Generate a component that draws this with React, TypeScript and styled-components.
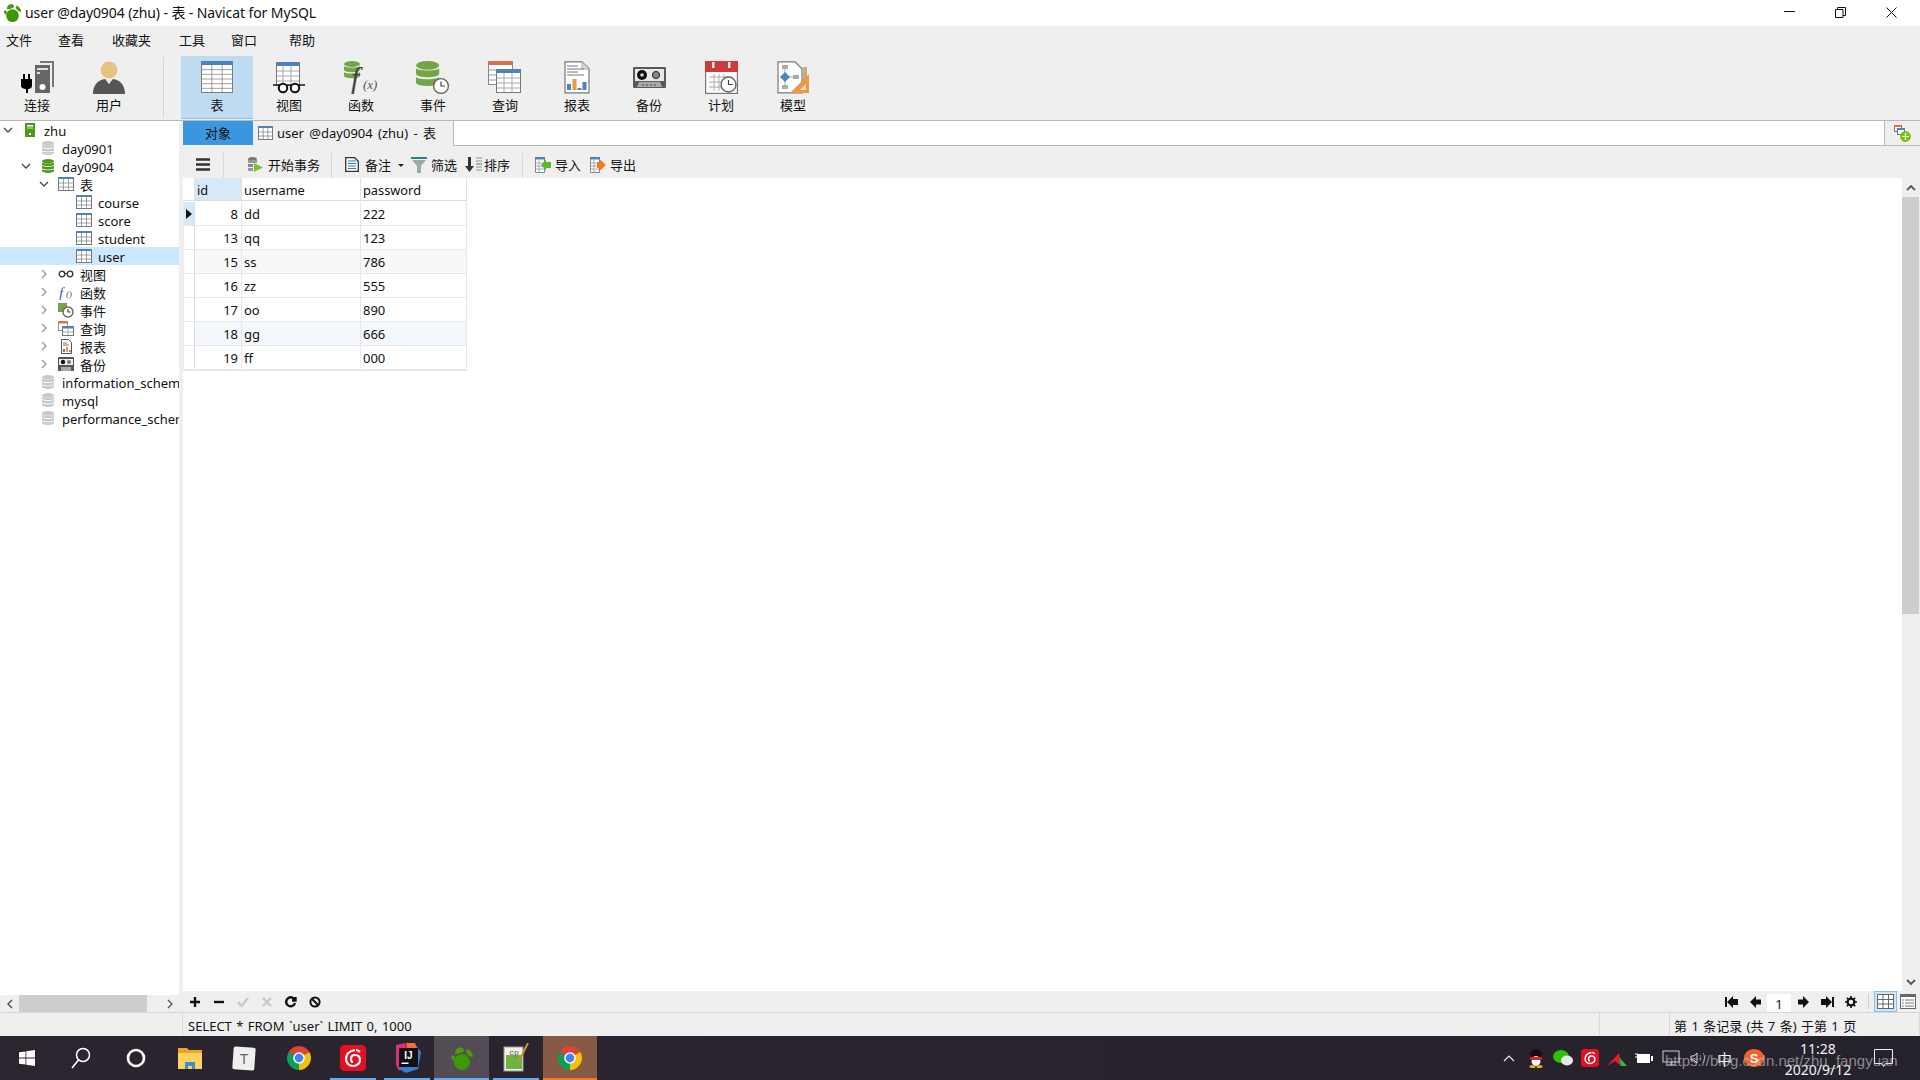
import React from "react";
import styled, { createGlobalStyle } from "styled-components";

const Global = createGlobalStyle`
  html, body { margin: 0; padding: 0; background: #efefef; overflow: hidden; }
  * { box-sizing: border-box; }
  #root { width: 1920px; height: 1080px; }
`;

const FONT = `"Noto Sans", "Noto Sans CJK SC", sans-serif`;

const Page = styled.div`
  position: relative;
  width: 1920px;
  height: 1080px;
  display: flex;
  flex-direction: column;
  overflow: hidden;
  font-family: ${FONT};
  font-size: 13px;
  color: #111;
  background: #efefef;
`;

const TitleBar = styled.div`
  height: 26px;
  flex: none;
  display: flex;
  align-items: center;
  background: #fff;
  padding: 0 3px 2px 3px;
`;
const TitleText = styled.span`
  margin-left: 3px;
  font-size: 14px;
  letter-spacing: -0.1px;
  white-space: nowrap;
`;
const WinButtons = styled.div`
  margin-left: auto;
  display: flex;
`;
const WinButton = styled.div`
  width: 51px;
  height: 24px;
  display: flex;
  align-items: center;
  justify-content: center;
`;

const MenuBar = styled.div`
  height: 29px;
  flex: none;
  display: flex;
  align-items: center;
  padding: 0 0 2px 6px;
`;
const MenuItem = styled.span<{ $w: number }>`
  width: ${(p) => p.$w}px;
  flex: none;
  font-size: 13px;
`;

const Toolbar = styled.div`
  height: 65px;
  flex: none;
  display: flex;
  padding-left: 1px;
`;
const ToolItem = styled.div<{ $active?: boolean }>`
  width: 72px;
  height: 63px;
  margin-top: 1px;
  padding-top: 3px;
  display: flex;
  flex-direction: column;
  align-items: center;
  background: ${(p) => (p.$active ? "#bedbf2" : "transparent")};
  border-bottom: ${(p) => (p.$active ? "1px solid #8fc3ee" : "none")};
`;
const ToolIcon = styled.div`
  height: 36px;
  display: flex;
  align-items: center;
  justify-content: center;
`;
const ToolLabel = styled.span`
  margin-top: 1px;
  line-height: 18px;
  font-size: 13px;
`;
const ToolSep = styled.div`
  width: 36px;
  display: flex;
  justify-content: center;
  &::before {
    content: "";
    width: 1px;
    height: 61px;
    margin-top: 2px;
    background: #d6d6d6;
  }
`;

const Workspace = styled.div`
  height: 893px;
  flex: none;
  display: flex;
  border-top: 1px solid #b8b8b8;
  border-bottom: 1px solid #d6d6d6;
`;
const Sidebar = styled.div`
  width: 183px;
  flex: none;
  display: flex;
  flex-direction: column;
`;
const Tree = styled.div`
  width: 179px;
  flex: 1;
  background: #fff;
  overflow: hidden;
`;
const TreeRow = styled.div<{ $level: number; $selected?: boolean }>`
  height: 18px;
  display: flex;
  align-items: center;
  padding-left: ${(p) => p.$level * 18}px;
  background: ${(p) => (p.$selected ? "#cce8ff" : "transparent")};
  white-space: nowrap;
  overflow: hidden;
`;
const Chevron = styled.div`
  width: 16px;
  flex: none;
  display: flex;
  justify-content: center;
`;
const TreeIcon = styled.div`
  width: 28px;
  flex: none;
  display: flex;
  justify-content: center;
`;
const TreeText = styled.span`
  font-size: 13px;
  line-height: 18px;
  padding-top: 2px;
`;
const HScroll = styled.div`
  width: 183px;
  height: 17px;
  flex: none;
  display: flex;
  align-items: center;
`;
const HArrow = styled.div<{ $w: number; $end?: boolean }>`
  width: ${(p) => p.$w}px;
  flex: none;
  display: flex;
  justify-content: ${(p) => (p.$end ? "flex-end" : "center")};
  padding-right: ${(p) => (p.$end ? 10 : 0)}px;
`;
const HThumb = styled.div`
  width: 128px;
  height: 17px;
  flex: none;
  background: #cdcdcd;
`;

const Main = styled.div`
  flex: 1;
  min-width: 0;
  display: flex;
  flex-direction: column;
`;
const Tabs = styled.div`
  height: 25px;
  flex: none;
  display: flex;
`;
const ObjectTab = styled.div`
  width: 70px;
  height: 24px;
  flex: none;
  display: flex;
  align-items: center;
  justify-content: center;
  padding-bottom: 2px;
  background: #3b96e0;
`;
const DocTab = styled.div`
  width: 200px;
  height: 24px;
  flex: none;
  display: flex;
  align-items: center;
  gap: 4px;
  padding: 0 0 1px 5px;
  font-size: 13px;
  word-spacing: 2px;
  white-space: nowrap;
`;
const TabFill = styled.div`
  flex: 1;
  background: #fff;
  border-left: 1px solid #b8b8b8;
  border-right: 1px solid #b8b8b8;
  border-bottom: 1px solid #b8b8b8;
`;
const TabAdd = styled.div`
  width: 35px;
  flex: none;
  display: flex;
  align-items: center;
  justify-content: flex-start;
  padding-left: 9px;
  border-bottom: 1px solid #b8b8b8;
`;

const SubBar = styled.div`
  height: 32px;
  flex: none;
  display: flex;
  align-items: flex-end;
`;
const SubGroup = styled.div<{ $w?: number; $pad: number }>`
  ${(p) => (p.$w ? `width: ${p.$w}px; flex: none;` : "")}
  height: 25px;
  padding: 0 0 2px ${(p) => p.$pad}px;
  display: flex;
  align-items: center;
  border-right: ${(p) => (p.$w ? "1px solid #d8d8d8" : "none")};
`;
const SubBtn = styled.div<{ $gap: number; $left?: number }>`
  display: flex;
  align-items: center;
  gap: ${(p) => p.$gap}px;
  margin-left: ${(p) => p.$left ?? 0}px;
  font-size: 13px;
  white-space: nowrap;
`;
const Caret = styled.div`
  width: 20px;
  display: flex;
  justify-content: center;
  &::before {
    content: "";
    margin-top: 1px;
    border-left: 3px solid transparent;
    border-right: 3px solid transparent;
    border-top: 3px solid #222;
  }
`;

const Content = styled.div`
  flex: 1;
  min-height: 0;
  display: flex;
`;
const GridArea = styled.div`
  flex: 1;
  background: #fff;
`;
const Grid = styled.div`
  width: 284px;
  display: grid;
  grid-template-columns: 12px 47px 119px 106px;
  grid-auto-rows: 24px;
  border-bottom: 1px solid #e6e6e6;
`;
const HeadCell = styled.div<{ $active?: boolean }>`
  height: 23px;
  padding: 1px 0 0 2px;
  display: flex;
  align-items: center;
  font-size: 12.8px;
  background: ${(p) => (p.$active ? "#d7e8f7" : "#fff")};
  border-right: 1px solid #e2e2e2;
  border-bottom: 1px solid #dcdcdc;
`;
const Cell = styled.div<{ $right?: boolean; $bg?: string }>`
  display: flex;
  align-items: center;
  justify-content: ${(p) => (p.$right ? "flex-end" : "flex-start")};
  padding: 0 3px 0 2px;
  font-size: 13px;
  background: ${(p) => p.$bg ?? "#fff"};
  border-right: 1px solid #e8e8e8;
  border-bottom: 1px solid #e8e8e8;
`;
const RowHead = styled.div<{ $active?: boolean }>`
  display: flex;
  align-items: center;
  justify-content: center;
  background: ${(p) => (p.$active ? "#d7e8f7" : "#fff")};
  border-right: 1px solid #dcdcdc;
  border-bottom: 1px solid #e8e8e8;
  border-left: 1px solid #efefef;
`;
const VScroll = styled.div`
  width: 18px;
  flex: none;
  display: flex;
  flex-direction: column;
  align-items: center;
  padding-right: 1px;
  background: #efefef;
`;
const VArrow = styled.div`
  height: 19px;
  flex: none;
  display: flex;
  align-items: center;
  justify-content: center;
`;
const VThumb = styled.div`
  width: 17px;
  height: 417px;
  flex: none;
  background: #cdcdcd;
`;
const VRest = styled.div`
  flex: 1;
`;

const NavBar = styled.div`
  height: 21px;
  flex: none;
  display: flex;
  align-items: center;
  padding-right: 4px;
`;
const NavCell = styled.div`
  width: 24px;
  flex: none;
  display: flex;
  align-items: center;
  justify-content: center;
`;
const NavSpacer = styled.div`
  flex: 1;
`;
const PageBox = styled.div`
  width: 24px;
  height: 18px;
  margin-top: 3px;
  flex: none;
  background: #fff;
  text-align: center;
  line-height: 20px;
  font-size: 13px;
`;
const NavSep = styled.div`
  width: 1px;
  height: 15px;
  margin: 0 5px;
  background: #d0d0d0;
`;
const ViewBtn = styled.div<{ $on?: boolean; $w: number }>`
  width: ${(p) => p.$w}px;
  height: 21px;
  flex: none;
  margin-left: ${(p) => (p.$on ? 0 : 3)}px;
  display: flex;
  align-items: center;
  justify-content: center;
  background: ${(p) => (p.$on ? "#cfe6f8" : "transparent")};
  border: ${(p) => (p.$on ? "1px solid #8cc0ec" : "none")};
`;

const StatusBar = styled.div`
  height: 23px;
  flex: none;
  display: flex;
  font-size: 13px;
  word-spacing: 1px;
`;
const StatusCell = styled.div<{ $w?: number; $pad?: number }>`
  ${(p) => (p.$w ? `width: ${p.$w}px; flex: none;` : "flex: 1;")}
  padding: 2px 0 0 ${(p) => p.$pad ?? 0}px;
  display: flex;
  align-items: center;
  white-space: nowrap;
  border-right: 1px solid #dadada;
`;

const Taskbar = styled.div`
  height: 44px;
  flex: none;
  display: flex;
  background: linear-gradient(90deg, #2b2530, #28232e 50%, #26222c);
  color: #f2f2f2;
`;
const TaskCell = styled.div<{ $state?: "open" | "active" | "focus" }>`
  position: relative;
  width: 54.3px;
  flex: none;
  display: flex;
  align-items: center;
  justify-content: center;
  background: ${(p) =>
    p.$state === "active" ? "#534c54" : p.$state === "focus" ? "#875a43" : "transparent"};
  &::after {
    content: "";
    display: ${(p) => (p.$state ? "block" : "none")};
    position: absolute;
    left: ${(p) => (p.$state === "open" ? 4 : 0)}px;
    right: ${(p) => (p.$state === "open" ? 4 : 0)}px;
    bottom: 0;
    height: 2px;
    background: ${(p) => (p.$state === "focus" ? "#f57c13" : "#63ace6")};
  }
`;
const Tray = styled.div`
  margin-left: auto;
  display: flex;
  padding-right: 20px;
`;
const TrayCell = styled.div<{ $w?: number }>`
  width: ${(p) => p.$w ?? 27}px;
  flex: none;
  display: flex;
  align-items: center;
  justify-content: center;
  font-size: 15px;
`;
const Clock = styled.div`
  width: 96px;
  flex: none;
  display: flex;
  flex-direction: column;
  align-items: center;
  justify-content: center;
  font-size: 14px;
  line-height: 21px;
  padding-top: 1px;
`;
const NotifyCell = styled.div`
  width: 34px;
  flex: none;
  display: flex;
  align-items: center;
  justify-content: center;
`;
const Watermark = styled.span`
  position: absolute;
  left: 1665px;
  top: 1050px;
  font-family: "Liberation Sans", sans-serif;
  font-size: 15px;
  line-height: 22px;
  color: rgba(205, 205, 205, 0.62);
  white-space: nowrap;
`;

/* ---------- icons ---------- */

const TableIcon = ({ w = 16, h = 14, head = "#4f81bd", cols = 3, rows = 3, line = "#7a7a7a" }: {
  w?: number; h?: number; head?: string; cols?: number; rows?: number; line?: string;
}) => {
  const hh = Math.max(2, Math.round(h * 0.14));
  const v = Array.from({ length: cols - 1 }, (_, i) => 0.5 + ((i + 1) * (w - 1)) / cols);
  const r = Array.from({ length: rows - 1 }, (_, i) => hh + ((i + 1) * (h - hh)) / rows);
  return (
    <svg width={w} height={h} viewBox={`0 0 ${w} ${h}`}>
      <rect x="0.5" y="0.5" width={w - 1} height={h - 1} fill="#fff" stroke={line} />
      <rect x="0" y="0" width={w} height={hh} fill={head} />
      {v.map((x) => <line key={x} x1={x} x2={x} y1={hh} y2={h} stroke={line} strokeOpacity="0.7" />)}
      {r.map((y) => <line key={y} x1="0" x2={w} y1={y} y2={y} stroke={line} strokeOpacity="0.7" />)}
    </svg>
  );
};

const DbIcon = ({ color = "#c9c9c9", w = 12, h = 14 }: { color?: string; w?: number; h?: number }) => (
  <svg width={w} height={h} viewBox="0 0 12 14">
    <ellipse cx="6" cy="2.2" rx="6" ry="2.2" fill={color} />
    <path d="M0 3.4c1 1.5 11 1.5 12 0v2.2c0 2-12 2-12 0z" fill={color} />
    <path d="M0 6.8c1 1.5 11 1.5 12 0V9c0 2-12 2-12 0z" fill={color} />
    <path d="M0 10.2c1 1.5 11 1.5 12 0v1.6c0 2.9-12 2.9-12 0z" fill={color} />
  </svg>
);

const ServerIcon = () => (
  <svg width="11" height="14" viewBox="0 0 11 14">
    <rect width="10" height="14" fill="#4b9a1d" />
    <rect x="2" y="2" width="6" height="1.5" fill="#fff" />
    <rect x="2" y="4.5" width="6" height="1" fill="#cfe8bf" />
    <rect x="4" y="10" width="2" height="2" fill="#fff" />
  </svg>
);

const ClockBadge = ({ cx, cy, r }: { cx: number; cy: number; r: number }) => (
  <g>
    <circle cx={cx} cy={cy} r={r} fill="#fff" stroke="#666" strokeWidth="1.4" />
    <path d={`M${cx} ${cy - r * 0.6}V${cy}H${cx + r * 0.55}`} fill="none" stroke="#444" strokeWidth="1.2" />
  </g>
);

const ConnectIcon = () => (
  <svg width="34" height="33" viewBox="0 0 34 33">
    <path d="M20 1h13v25" fill="none" stroke="#777" strokeWidth="2" />
    <rect x="15" y="4" width="15" height="28" fill="#666" />
    <rect x="17" y="7" width="11" height="2" fill="#ddd" />
    <rect x="17" y="11" width="3" height="2" fill="#ddd" />
    <circle cx="22.5" cy="26" r="3" fill="#fff" />
    <path d="M3 13h2v5h3v-5h2v5h2v7c0 2-2 3-4 3v4H6v-4c-2 0-5-1-5-3v-7h2z" fill="#000" />
  </svg>
);
const UserIcon = () => (
  <svg width="34" height="33" viewBox="0 0 34 33">
    <circle cx="17" cy="9" r="8.4" fill="#e6c381" />
    <path d="M1 33c0-9 5-14 12-15l4 3 4-3c7 1 12 6 12 15z" fill="#555" />
    <path d="M13 18l4 3 4-3-4 5z" fill="#fff" />
  </svg>
);
const ViewIcon = () => (
  <svg width="34" height="33" viewBox="0 0 34 33">
    <rect x="4.5" y="1.5" width="23" height="23" fill="#fff" stroke="#777" />
    <rect x="4" y="1" width="24" height="4" fill="#4f81bd" />
    {[10, 15, 20].map((y) => <line key={y} x1="5" x2="27" y1={y} y2={y} stroke="#aaa" />)}
    {[11, 19].map((x) => <line key={x} x1={x} x2={x} y1="5" y2="24" stroke="#aaa" />)}
    <path d="M1 24h32" stroke="#222" strokeWidth="1.6" />
    <circle cx="11" cy="27" r="4.2" fill="#fff" stroke="#111" strokeWidth="2" />
    <circle cx="23" cy="27" r="4.2" fill="#fff" stroke="#111" strokeWidth="2" />
  </svg>
);
const GreenStack = ({ s = 1 }: { s?: number }) => (
  <g transform={`scale(${s})`}>
    <ellipse cx="8" cy="3" rx="8" ry="3" fill="#73a648" />
    <path d="M0 5c1 2 15 2 16 0v4c-1 3-15 3-16 0z" fill="#73a648" />
    <path d="M0 11c1 2 15 2 16 0v4c-1 3-15 3-16 0z" fill="#73a648" />
  </g>
);
const FuncIcon = () => (
  <svg width="34" height="33" viewBox="0 0 34 33">
    <GreenStack />
    <text x="7" y="27" fontFamily="'Liberation Serif', serif" fontStyle="italic" fontSize="30" fill="#444">f</text>
    <text x="19" y="28" fontFamily="'Liberation Serif', serif" fontStyle="italic" fontSize="13" fill="#555">(x)</text>
  </svg>
);
const EventIcon = () => (
  <svg width="34" height="33" viewBox="0 0 34 33">
    <GreenStack s={1.45} />
    <ClockBadge cx={25} cy={25} r={7.4} />
  </svg>
);
const QueryIcon = () => (
  <svg width="34" height="33" viewBox="0 0 34 33">
    <rect x="0.5" y="0.5" width="24" height="23" fill="#fff" stroke="#888" />
    <rect width="25" height="4" fill="#d9704e" />
    {[9, 14, 19].map((y) => <line key={y} x1="1" x2="8" y1={y} y2={y} stroke="#999" />)}
    <rect x="8.5" y="9.5" width="24" height="22" fill="#fff" stroke="#777" />
    <rect x="8" y="8" width="25" height="4" fill="#4f81bd" />
    {[17, 22, 27].map((y) => <line key={y} x1="9" x2="32" y1={y} y2={y} stroke="#aaa" />)}
    {[16, 24].map((x) => <line key={x} x1={x} x2={x} y1="12" y2="31" stroke="#aaa" />)}
  </svg>
);
const ReportIcon = () => (
  <svg width="26" height="33" viewBox="0 0 26 33">
    <path d="M1 .8h17l7 7v24H1z" fill="#fff" stroke="#777" strokeWidth="1.2" />
    <path d="M18 1v7h7" fill="#ddd" stroke="#aaa" />
    {[5, 8, 11, 14].map((y, i) => <line key={y} x1="3" x2={i % 2 ? 20 : 14} y1={y} y2={y} stroke="#777" />)}
    <rect x="3" y="23" width="4" height="6" fill="#4f81bd" />
    <rect x="8.5" y="18" width="4" height="11" fill="#f09a37" />
    <rect x="13.5" y="27" width="4" height="2" fill="#4f81bd" />
    <rect x="18.5" y="21" width="4" height="8" fill="#4f81bd" />
  </svg>
);
const BackupIcon = () => (
  <svg width="33" height="21" viewBox="0 0 33 21">
    <path d="M1 0h31a1 1 0 011 1v19a1 1 0 01-1 1H1a1 1 0 01-1-1V1a1 1 0 011-1z" fill="#5a5a5a" />
    <rect x="2" y="2" width="29" height="12" fill="#e9e9e9" />
    <circle cx="9" cy="8" r="5" fill="#111" />
    <circle cx="9" cy="8" r="1.8" fill="#ddd" />
    <circle cx="23" cy="8" r="3.6" fill="#888" stroke="#222" />
    <path d="M6 15h21l2 5H4z" fill="#aaa" />
    <path d="M9 18h15" stroke="#444" strokeDasharray="2 2" />
  </svg>
);
const PlanIcon = () => (
  <svg width="33" height="33" viewBox="0 0 33 33">
    <rect x="0.6" y="2" width="31.8" height="30.4" fill="#fff" stroke="#777" strokeWidth="1.2" />
    <rect width="33" height="11" fill="#d0393c" />
    <rect x="7" y="1" width="2.4" height="6" fill="#fff" />
    <rect x="23" y="1" width="2.4" height="6" fill="#fff" />
    {[16, 21, 26].map((y) => <line key={y} x1="4" x2="24" y1={y} y2={y} stroke="#aaa" />)}
    {[9, 14, 19].map((x) => <line key={x} x1={x} x2={x} y1="13" y2="30" stroke="#aaa" />)}
    <ClockBadge cx={23.5} cy={23.5} r={7.5} />
  </svg>
);
const ModelIcon = () => (
  <svg width="33" height="33" viewBox="0 0 33 33">
    <path d="M1 .8h17l7 7v24H1z" fill="#fff" stroke="#777" strokeWidth="1.2" />
    <rect x="5" y="4" width="6" height="4" fill="#aaa" />
    <rect x="5" y="24" width="6" height="4" fill="#aaa" />
    <rect x="16" y="14" width="6" height="4" fill="#aaa" />
    <path d="M8 8v16M8 16h9" stroke="#aaa" />
    <path d="M8 11l5 5-5 5-5-5z" fill="#4f81bd" />
    <rect x="26" y="6" width="4" height="14" fill="#c9ad7f" />
    <path d="M32 13v19H13z" fill="#f1983f" />
    <path d="M29 23v6h-6z" fill="#fff" fillOpacity="0.75" />
  </svg>
);

const ChevronDown = () => (
  <svg width="10" height="6" viewBox="0 0 10 6"><path d="M1 1l4 4 4-4" fill="none" stroke="#444" strokeWidth="1.3" /></svg>
);
const ChevronRight = ({ color = "#9a9a9a" }: { color?: string }) => (
  <svg width="6" height="10" viewBox="0 0 6 10"><path d="M1 1l4 4-4 4" fill="none" stroke={color} strokeWidth="1.3" /></svg>
);
const Glasses = () => (
  <svg width="16" height="8" viewBox="0 0 16 8">
    <circle cx="4" cy="4" r="2.8" fill="none" stroke="#333" strokeWidth="1.3" />
    <circle cx="12" cy="4" r="2.8" fill="none" stroke="#333" strokeWidth="1.3" />
    <path d="M6.5 3.5h3" stroke="#333" />
  </svg>
);
const SmallFunc = () => (
  <svg width="15" height="15" viewBox="0 0 15 15">
    <text x="0" y="13" fontFamily="'Liberation Serif', serif" fontStyle="italic" fontSize="15" fill="#2f6ea8">f</text>
    <text x="7" y="12" fontFamily="'Liberation Serif', serif" fontStyle="italic" fontSize="9" fill="#555">()</text>
  </svg>
);
const SmallEvent = () => (
  <svg width="16" height="15" viewBox="0 0 16 15">
    <rect width="9" height="9" fill="#73a648" />
    <ClockBadge cx={10} cy={9} r={5} />
  </svg>
);
const SmallQuery = () => (
  <svg width="16" height="15" viewBox="0 0 16 15">
    <rect x="0.5" y="0.5" width="9" height="9" fill="#fff" stroke="#999" />
    <rect width="10" height="2.5" fill="#d9704e" />
    <rect x="4.5" y="5.5" width="11" height="9" fill="#fff" stroke="#777" />
    <rect x="4" y="5" width="12" height="2.5" fill="#4f81bd" />
    <path d="M10 7v7M5 11h10" stroke="#aaa" />
  </svg>
);
const SmallReport = () => (
  <svg width="11" height="15" viewBox="0 0 11 15">
    <path d="M.5.5h7l3 3v11H.5z" fill="#fff" stroke="#555" />
    <path d="M2 4h4M2 6h6" stroke="#777" />
    <rect x="2" y="10" width="2" height="3" fill="#4f81bd" />
    <rect x="5" y="8" width="2" height="5" fill="#f09a37" />
    <rect x="8" y="11" width="1.6" height="2" fill="#4f81bd" />
  </svg>
);
const SmallBackup = () => (
  <svg width="16" height="14" viewBox="0 0 16 14">
    <rect width="16" height="14" rx="1" fill="#555" />
    <rect x="1" y="2" width="14" height="6" fill="#eee" />
    <circle cx="5" cy="5" r="2.2" fill="#111" />
    <circle cx="11" cy="5" r="2" fill="#777" />
    <rect x="3" y="10" width="10" height="4" fill="#aaa" />
  </svg>
);
const GreenTop = () => (
  <g>
    <ellipse cx="4.5" cy="2" rx="4.5" ry="2" fill="#777" />
    <rect y="3" width="9" height="3" fill="#999" />
    <rect y="7" width="5" height="3" fill="#888" />
    <rect y="11" width="5" height="3" fill="#999" />
  </g>
);
const BeginIcon = () => (
  <svg width="16" height="15" viewBox="0 0 16 15">
    <GreenTop />
    <path d="M6 6l9 4.5-9 4.5z" fill="#7cc02c" />
  </svg>
);
const NoteIcon = () => (
  <svg width="14" height="15" viewBox="0 0 14 15">
    <path d="M.7.7h9l3.6 3.6v10H.7z" fill="#fff" stroke="#333" strokeWidth="1.3" />
    {[4, 6.5, 9, 11.5].map((y) => <line key={y} x1="3" x2="11" y1={y} y2={y} stroke="#2a78b5" />)}
  </svg>
);
const FilterIcon = () => (
  <svg width="16" height="16" viewBox="0 0 16 16">
    <rect width="16" height="2" fill="#267f8c" />
    <path d="M1 3h14l-5 6v7H6V9z" fill="#9ea7a8" />
  </svg>
);
const SortIcon = () => (
  <svg width="17" height="15" viewBox="0 0 17 15">
    <path d="M3 0h3v9h3l-4.5 6L0 9h3z" fill="#333" />
    <path d="M11 1h6M11 4h6M11 10h6M11 13h6" stroke="#6aa98c" />
    <path d="M11 7h6" stroke="#d83b3b" />
  </svg>
);
const ImportIcon = ({ out }: { out?: boolean }) => (
  <svg width="16" height="16" viewBox="0 0 16 16">
    <path d="M.5 .5h9v15h-9z" fill="#fff" stroke="#888" />
    <rect width="10" height="2.5" fill="#4f81bd" />
    <path d="M1 6h8M1 9h8M1 12h8M4 3v12" stroke="#aaa" />
    {out ? (
      <path d="M7 5h3V2.5L16 8l-6 5.5V11H7z" fill="#f57c13" />
    ) : (
      <path d="M16 5h-5V2.5L6 8l5 5.5V11h5z" fill="#5cb82a" />
    )}
  </svg>
);
const AddIcon = () => (
  <svg width="17" height="17" viewBox="0 0 17 17">
    <rect x="0.5" y="0.5" width="7" height="6" fill="#fff" stroke="#777" />
    <rect width="8" height="2" fill="#d9704e" />
    <rect x="3.5" y="3.5" width="7" height="6" fill="#fff" stroke="#777" />
    <rect x="3" y="3" width="8" height="2" fill="#4f81bd" />
    <circle cx="11.5" cy="11.5" r="5.4" fill="#74c30c" />
    <path d="M11.5 8v7M8 11.500h7" stroke="#fff" strokeWidth="1.2" />
  </svg>
);
const Hamburger = () => (
  <svg width="14" height="13" viewBox="0 0 14 13"><path d="M0 1.5h14M0 6.5h14M0 11.5h14" stroke="#333" strokeWidth="2.6" /></svg>
);
const NavIcon = ({ d, color = "#111", w = 2.4 }: { d: string; color?: string; w?: number }) => (
  <svg width="12" height="12" viewBox="0 0 12 12"><path d={d} fill="none" stroke={color} strokeWidth={w} /></svg>
);
const Solid = ({ d }: { d: string }) => (
  <svg width="13" height="12" viewBox="0 0 13 12"><path d={d} fill="#111" /></svg>
);
const Gear = () => (
  <svg width="12" height="12" viewBox="0 0 12 12">
    <circle cx="6" cy="6" r="3.4" fill="none" stroke="#111" strokeWidth="2.2" />
    <path d="M6 0v12M0 6h12M1.8 1.8l8.4 8.4M10.2 1.8l-8.4 8.4" stroke="#111" strokeWidth="1.6" strokeDasharray="2 8" />
  </svg>
);
const GridView = () => (
  <svg width="17" height="15" viewBox="0 0 17 15">
    <rect x="0.5" y="0.5" width="16" height="14" fill="#fff" stroke="#666" />
    <path d="M6 0v15M11.5 0v15M0 5.5h17M0 10h17" stroke="#666" />
  </svg>
);
const FormView = () => (
  <svg width="16" height="15" viewBox="0 0 16 15">
    <rect x="0.5" y="0.5" width="15" height="14" fill="#fff" stroke="#666" />
    <rect width="16" height="3" fill="#666" />
    <path d="M2 6h2M5 6h9M2 9h2M5 9h9M2 12h2M5 12h9" stroke="#777" />
  </svg>
);

/* taskbar */
const WinLogo = () => (
  <svg width="16" height="16" viewBox="0 0 16 16"><path d="M0 2.3l6.5-.9v6.2H0zM7.3 1.3L16 0v7.6H7.3zM0 8.4h6.5v6.2L0 13.7zM7.3 8.4H16V16l-8.7-1.3z" fill="#fff" /></svg>
);
const SearchGlyph = () => (
  <svg width="20" height="22" viewBox="0 0 20 22">
    <circle cx="12" cy="8" r="6.5" fill="none" stroke="#fff" strokeWidth="1.5" />
    <path d="M7.5 13L1 21" stroke="#fff" strokeWidth="1.5" />
  </svg>
);
const Cortana = () => (
  <svg width="20" height="20" viewBox="0 0 20 20"><circle cx="10" cy="10" r="8" fill="none" stroke="#fff" strokeWidth="2.6" /></svg>
);
const Folder = () => (
  <svg width="24" height="22" viewBox="0 0 24 22">
    <path d="M0 1h9l2 2h13v19H0z" fill="#e8a526" />
    <rect y="6" width="24" height="16" fill="#ffd25e" />
    <path d="M7 15h10v7h-3v-3h-4v3H7z" fill="#3b8fd6" />
  </svg>
);
const TDoc = () => (
  <svg width="24" height="25" viewBox="0 0 24 25">
    <rect x="1" y="1" width="22" height="23" rx="2" fill="#efefef" transform="rotate(4 12 12)" />
    <text x="12" y="18" fontFamily="'Liberation Sans', sans-serif" fontSize="14" fill="#666" textAnchor="middle">T</text>
  </svg>
);
const ChromeIcon = ({ s = 24 }: { s?: number }) => (
  <svg width={s} height={s} viewBox="0 0 24 24">
    <path d="M12 12L1.61 6A12 12 0 0122.39 6z" fill="#db4437" />
    <path d="M12 12L22.39 6A12 12 0 0112 24z" fill="#f4c20d" />
    <path d="M12 12L12 24A12 12 0 011.61 6z" fill="#0f9d58" />
    <circle cx="12" cy="12" r="5.8" fill="#fff" />
    <circle cx="12" cy="12" r="4.4" fill="#4285f4" />
  </svg>
);
const Netease = ({ s = 26 }: { s?: number }) => (
  <svg width={s} height={s} viewBox="0 0 26 26">
    <path d="M3 0h20l3 3v20l-3 3H3l-3-3V3z" fill="#e60e23" />
    <path d="M15 5c-5 1-9 4-9 9 0 4 3 7 7 7s7-3 7-6-2-5-5-5-4 2-4 4 1 3 2 3" fill="none" stroke="#fff" strokeWidth="2.2" />
    <path d="M16 5c2 0 3 1 4 2" fill="none" stroke="#fff" strokeWidth="2" />
  </svg>
);
const IJ = () => (
  <svg width="27" height="30" viewBox="0 0 27 30">
    <path d="M2 2l9-2 3 12L5 28l-3-6z" fill="#e0306a" />
    <path d="M20 0l7 9-3 17-12 4L5 26z" fill="#3a7bd5" />
    <path d="M12 0h9l3 8-10 6z" fill="#f26d3d" />
    <rect x="5" y="5" width="19" height="19" fill="#111" />
    <text x="14.5" y="15.5" fontFamily="'Liberation Sans', sans-serif" fontWeight="700" fontSize="10" fill="#fff" textAnchor="middle">IJ</text>
    <rect x="7.5" y="19.5" width="7" height="1.5" fill="#fff" />
  </svg>
);
const NavicatLeaf = ({ s = 24 }: { s?: number }) => (
  <svg width={s} height={s} viewBox="0 0 24 24">
    <path d="M8 2c3-2 6 0 6 3-2 2-6 3-9 3 0-3 1-5 3-6zM17 3c3 1 6 4 6 8-3 0-6-2-7-5z" fill="#4f9a0a" />
    <path d="M1 10c1-1 3-1 4 1l-1 4c-2-1-3-3-3-5z" fill="#4f9a0a" />
    <circle cx="12" cy="16" r="8" fill="#3c9a00" />
  </svg>
);
const NotepadIcon = () => (
  <svg width="26" height="30" viewBox="0 0 26 30">
    <rect x="1" y="4" width="19" height="24" fill="#f2f2e8" stroke="#999" />
    <rect x="3" y="12" width="16" height="14" fill="#6cb33f" />
    <text x="11" y="12" fontFamily="'Liberation Mono', monospace" fontSize="8" fill="#555" textAnchor="middle">cp</text>
    <path d="M25 0L15 20" stroke="#c6972c" strokeWidth="2" />
  </svg>
);
const QQ = () => (
  <svg width="16" height="19" viewBox="0 0 16 19">
    <ellipse cx="8" cy="8" rx="6" ry="8" fill="#111" />
    <ellipse cx="8" cy="12" rx="4.5" ry="5" fill="#fff" />
    <rect x="2" y="8" width="12" height="3" rx="1" fill="#e0241a" />
    <ellipse cx="4.5" cy="17.5" rx="3" ry="1.5" fill="#f5a623" />
    <ellipse cx="11.5" cy="17.5" rx="3" ry="1.5" fill="#f5a623" />
  </svg>
);
const WeChat = () => (
  <svg width="20" height="16" viewBox="0 0 20 16">
    <ellipse cx="8" cy="6.5" rx="8" ry="6.5" fill="#2dc100" />
    <ellipse cx="14" cy="10.5" rx="6" ry="5" fill="#e8e8e8" />
  </svg>
);
const RedGreen = () => (
  <svg width="20" height="15" viewBox="0 0 20 15">
    <path d="M0 15L12 2l2 13-6-5z" fill="#e81a1a" />
    <path d="M12 6l8 9h-6z" fill="#19c53a" />
  </svg>
);
const Battery = () => (
  <svg width="18" height="11" viewBox="0 0 18 11">
    <rect x="2" y="1" width="13" height="9" fill="#fff" />
    <rect x="16" y="3" width="2" height="5" fill="#fff" />
    <path d="M0 1h3M0 4h3" stroke="#fff" />
  </svg>
);
const NetGhost = () => (
  <svg width="18" height="16" viewBox="0 0 18 16">
    <rect x="1" y="1" width="16" height="11" fill="none" stroke="#cfcfcf" />
    <path d="M9 12v3M5 15h8" stroke="#cfcfcf" />
  </svg>
);
const Volume = () => (
  <svg width="16" height="14" viewBox="0 0 16 14">
    <path d="M1 5h3l3-3v10L4 9H1z" fill="none" stroke="#ddd" />
    <path d="M10 4c1 2 1 4 0 6M13 2c2 3 2 7 0 10" fill="none" stroke="#888" />
  </svg>
);
const Sogou = () => (
  <svg width="20" height="18" viewBox="0 0 20 18">
    <path d="M10 0c6 0 10 4 10 9s-4 9-10 9S0 14 0 9s4-9 10-9z" fill="#f2622c" />
    <text x="10" y="14" fontFamily="'Liberation Sans', sans-serif" fontWeight="700" fontSize="13" fill="#fff" textAnchor="middle">S</text>
  </svg>
);
const Notify = () => (
  <svg width="19" height="19" viewBox="0 0 19 19"><path d="M.5.5h18v14h-7l-2 3-2-3h-7z" fill="none" stroke="#eee" /></svg>
);

const MENUS: [string, number][] = [["文件", 52], ["查看", 54], ["收藏夹", 67], ["工具", 52], ["窗口", 58], ["帮助", 40]];

const TOOLS_A = [
  { label: "表", icon: <TableIcon w={32} h={32} cols={3} rows={6} />, active: true },
  { label: "视图", icon: <ViewIcon /> },
  { label: "函数", icon: <FuncIcon /> },
  { label: "事件", icon: <EventIcon /> },
  { label: "查询", icon: <QueryIcon /> },
  { label: "报表", icon: <ReportIcon /> },
  { label: "备份", icon: <BackupIcon /> },
  { label: "计划", icon: <PlanIcon /> },
  { label: "模型", icon: <ModelIcon /> },
];

type Node = { level: number; label: string; icon: React.ReactNode; open?: boolean; closed?: boolean; selected?: boolean };
const gray = <DbIcon />;
const tbl = <TableIcon />;
const NODES: Node[] = [
  { level: 0, label: "zhu", icon: <ServerIcon />, open: true },
  { level: 1, label: "day0901", icon: gray },
  { level: 1, label: "day0904", icon: <DbIcon color="#4b9a1d" />, open: true },
  { level: 2, label: "表", icon: tbl, open: true },
  { level: 3, label: "course", icon: tbl },
  { level: 3, label: "score", icon: tbl },
  { level: 3, label: "student", icon: tbl },
  { level: 3, label: "user", icon: tbl, selected: true },
  { level: 2, label: "视图", icon: <Glasses />, closed: true },
  { level: 2, label: "函数", icon: <SmallFunc />, closed: true },
  { level: 2, label: "事件", icon: <SmallEvent />, closed: true },
  { level: 2, label: "查询", icon: <SmallQuery />, closed: true },
  { level: 2, label: "报表", icon: <SmallReport />, closed: true },
  { level: 2, label: "备份", icon: <SmallBackup />, closed: true },
  { level: 1, label: "information_schema", icon: gray },
  { level: 1, label: "mysql", icon: gray },
  { level: 1, label: "performance_schema", icon: gray },
];

const ROWS: [string, string, string, string?][] = [
  ["8", "dd", "222"],
  ["13", "qq", "123"],
  ["15", "ss", "786", "#f8f8f8"],
  ["16", "zz", "555"],
  ["17", "oo", "890"],
  ["18", "gg", "666", "#f4f8fc"],
  ["19", "ff", "000"],
];

export default function App() {
  return (
    <Page>
      <Global />
      <TitleBar>
        <NavicatLeaf s={19} />
        <TitleText>user @day0904 (zhu) - 表 - Navicat for MySQL</TitleText>
        <WinButtons>
          <WinButton>
            <svg width="11" height="2" viewBox="0 0 11 2"><rect width="11" height="1" fill="#111" /></svg>
          </WinButton>
          <WinButton>
            <svg width="11" height="11" viewBox="0 0 11 11"><path d="M.5 2.5h7.5v8H.5zM2.5 2.5V.5h8v8H8" fill="none" stroke="#111" /></svg>
          </WinButton>
          <WinButton>
            <svg width="11" height="11" viewBox="0 0 11 11"><path d="M.5.5l10 10M10.500.5l-10 10" stroke="#111" /></svg>
          </WinButton>
        </WinButtons>
      </TitleBar>

      <MenuBar>
        {MENUS.map(([m, w]) => <MenuItem key={m} $w={w}>{m}</MenuItem>)}
      </MenuBar>

      <Toolbar>
        <ToolItem><ToolIcon><ConnectIcon /></ToolIcon><ToolLabel>连接</ToolLabel></ToolItem>
        <ToolItem><ToolIcon><UserIcon /></ToolIcon><ToolLabel>用户</ToolLabel></ToolItem>
        <ToolSep />
        {TOOLS_A.map((t) => (
          <ToolItem key={t.label} $active={t.active}>
            <ToolIcon>{t.icon}</ToolIcon>
            <ToolLabel>{t.label}</ToolLabel>
          </ToolItem>
        ))}
      </Toolbar>

      <Workspace>
        <Sidebar>
          <Tree>
            {NODES.map((n) => (
              <TreeRow key={n.level + n.label} $level={n.level} $selected={n.selected}>
                <Chevron>{n.open && <ChevronDown />}{n.closed && <ChevronRight />}</Chevron>
                <TreeIcon>{n.icon}</TreeIcon>
                <TreeText>{n.label}</TreeText>
              </TreeRow>
            ))}
          </Tree>
          <HScroll>
            <HArrow $w={19}><svg width="6" height="10" viewBox="0 0 6 10"><path d="M5 1L1 5l4 4" fill="none" stroke="#555" strokeWidth="1.5" /></svg></HArrow>
            <HThumb />
            <HArrow $w={36} $end><ChevronRight color="#555" /></HArrow>
          </HScroll>
        </Sidebar>

        <Main>
          <Tabs>
            <ObjectTab>对象</ObjectTab>
            <DocTab><TableIcon w={15} h={14} />user @day0904 (zhu) - 表</DocTab>
            <TabFill />
            <TabAdd><AddIcon /></TabAdd>
          </Tabs>

          <SubBar>
            <SubGroup $w={41} $pad={13}><Hamburger /></SubGroup>
            <SubGroup $w={108} $pad={24}>
              <SubBtn $gap={4}><BeginIcon />开始事务</SubBtn>
            </SubGroup>
            <SubGroup $w={191} $pad={13}>
              <SubBtn $gap={6}><NoteIcon />备注</SubBtn>
              <Caret />
              <SubBtn $gap={4}><FilterIcon />筛选</SubBtn>
              <SubBtn $gap={2} $left={8}><SortIcon />排序</SubBtn>
            </SubGroup>
            <SubGroup $pad={12}>
              <SubBtn $gap={4}><ImportIcon />导入</SubBtn>
              <SubBtn $gap={4} $left={9}><ImportIcon out />导出</SubBtn>
            </SubGroup>
          </SubBar>

          <Content>
            <GridArea>
              <Grid>
                <HeadCell />
                <HeadCell $active>id</HeadCell>
                <HeadCell>username</HeadCell>
                <HeadCell>password</HeadCell>
                {ROWS.map(([id, u, p, bg], i) => (
                  <React.Fragment key={id}>
                    <RowHead $active={i === 0}>
                      {i === 0 && (
                        <svg width="6" height="10" viewBox="0 0 6 10"><path d="M0 0l6 5-6 5z" fill="#111" /></svg>
                      )}
                    </RowHead>
                    <Cell $right $bg={bg}>{id}</Cell>
                    <Cell $bg={bg}>{u}</Cell>
                    <Cell $bg={bg}>{p}</Cell>
                  </React.Fragment>
                ))}
              </Grid>
            </GridArea>
            <VScroll>
              <VArrow><NavIcon d="M2 8l4-4 4 4" color="#555" w={1.8} /></VArrow>
              <VThumb />
              <VRest />
              <VArrow><NavIcon d="M2 4l4 4 4-4" color="#555" w={1.8} /></VArrow>
            </VScroll>
          </Content>

          <NavBar>
            <NavCell><NavIcon d="M6 1v10M1 6h10" /></NavCell>
            <NavCell><NavIcon d="M1 6h10" /></NavCell>
            <NavCell><NavIcon d="M1 6l3.500 4L11 2" color="#c8c8c8" /></NavCell>
            <NavCell><NavIcon d="M2 2l8 8M10 2l-8 8" color="#c8c8c8" /></NavCell>
            <NavCell><NavIcon d="M10 4.500A4.500 4.500 0 102.500 9 4.500 4.500 0 0010 7M7 4.500h3.500V1" /></NavCell>
            <NavCell>
              <svg width="12" height="12" viewBox="0 0 12 12"><circle cx="6" cy="6" r="4.600" fill="none" stroke="#111" strokeWidth="2" /><path d="M3 3l6 6" stroke="#111" strokeWidth="2" /></svg>
            </NavCell>
            <NavSpacer />
            <NavCell><Solid d="M0 1h2v10H0zM13 3H8V0L2 6l6 6V9h5z" /></NavCell>
            <NavCell><Solid d="M12 3.500H7V0L1 6l6 6V8.500h5z" /></NavCell>
            <PageBox>1</PageBox>
            <NavCell><Solid d="M1 3.500h5V0l6 6-6 6V8.500H1z" /></NavCell>
            <NavCell><Solid d="M0 3h5V0l6 6-6 6V9H0zM11 1h2v10h-2z" /></NavCell>
            <NavCell><Gear /></NavCell>
            <NavSep />
            <ViewBtn $on $w={23}><GridView /></ViewBtn>
            <ViewBtn $w={16}><FormView /></ViewBtn>
          </NavBar>
        </Main>
      </Workspace>

      <StatusBar>
        <StatusCell $w={183} />
        <StatusCell $w={1417} $pad={5}>SELECT * FROM `user` LIMIT 0, 1000</StatusCell>
        <StatusCell $w={70} />
        <StatusCell $pad={4}>第 1 条记录 (共 7 条) 于第 1 页</StatusCell>
      </StatusBar>

      <Taskbar>
        <TaskCell><WinLogo /></TaskCell>
        <TaskCell><SearchGlyph /></TaskCell>
        <TaskCell><Cortana /></TaskCell>
        <TaskCell><Folder /></TaskCell>
        <TaskCell><TDoc /></TaskCell>
        <TaskCell><ChromeIcon /></TaskCell>
        <TaskCell $state="open"><Netease /></TaskCell>
        <TaskCell $state="open"><IJ /></TaskCell>
        <TaskCell $state="active"><NavicatLeaf /></TaskCell>
        <TaskCell $state="open"><NotepadIcon /></TaskCell>
        <TaskCell $state="focus"><ChromeIcon /></TaskCell>
        <Tray>
          <TrayCell>
            <svg width="12" height="7" viewBox="0 0 12 7"><path d="M1 6l5-5 5 5" fill="none" stroke="#eee" strokeWidth="1.2" /></svg>
          </TrayCell>
          <TrayCell><QQ /></TrayCell>
          <TrayCell><WeChat /></TrayCell>
          <TrayCell><Netease s={18} /></TrayCell>
          <TrayCell><RedGreen /></TrayCell>
          <TrayCell><Battery /></TrayCell>
          <TrayCell><NetGhost /></TrayCell>
          <TrayCell><Volume /></TrayCell>
          <TrayCell>中</TrayCell>
          <TrayCell $w={32}><Sogou /></TrayCell>
          <Clock><span>11:28</span><span>2020/9/12</span></Clock>
          <NotifyCell><Notify /></NotifyCell>
        </Tray>
      </Taskbar>
      <Watermark>https://blog.csdn.net/zhu_fangyuan</Watermark>
    </Page>
  );
}
